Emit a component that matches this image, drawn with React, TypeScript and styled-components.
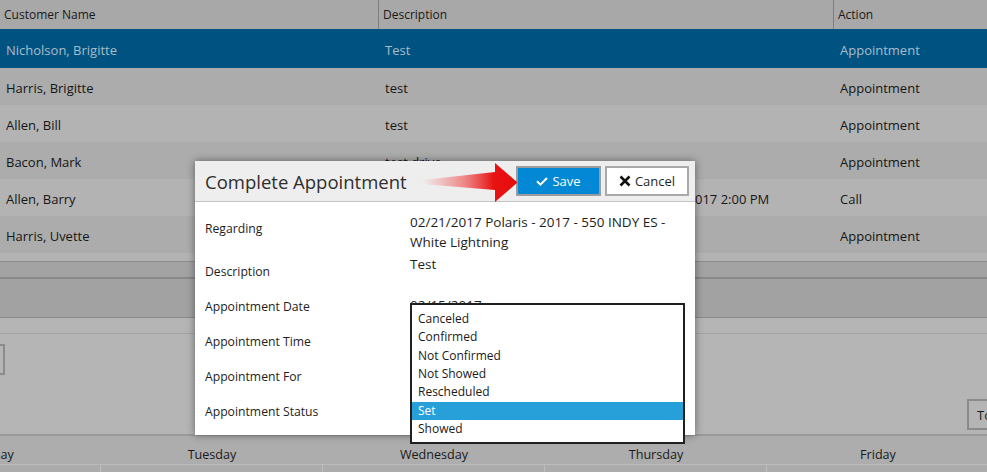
import React from 'react';
import styled, { createGlobalStyle } from 'styled-components';

type Activity = {
    id: number;
    customer: string;
    description: string;
    action: string;
};

const activities: Activity[] = [
    { id: 1, customer: 'Nicholson, Brigitte', description: 'Test', action: 'Appointment' },
    { id: 2, customer: 'Harris, Brigitte', description: 'test', action: 'Appointment' },
    { id: 3, customer: 'Allen, Bill', description: 'test', action: 'Appointment' },
    { id: 4, customer: 'Bacon, Mark', description: 'test drive', action: 'Appointment' },
    {
        id: 5,
        customer: 'Allen, Barry',
        description: 'Call to discuss financing options - follow up 02/22/2017 2:00 PM',
        action: 'Call',
    },
    { id: 6, customer: 'Harris, Uvette', description: 'test', action: 'Appointment' },
];

const selectedId = 1;

const statuses = ['Canceled', 'Confirmed', 'Not Confirmed', 'Not Showed', 'Rescheduled', 'Set', 'Showed'];
const currentStatus = 'Set';

const days = [
    { name: 'Monday', date: 20 },
    { name: 'Tuesday', date: 21 },
    { name: 'Wednesday', date: 22 },
    { name: 'Thursday', date: 23 },
    { name: 'Friday', date: 24 },
];

const COLUMNS = '378px 455px 1fr';
const DAY_COLUMNS = 'repeat(5, 222px)';

const GlobalStyle = createGlobalStyle`
    html, body {
        margin: 0;
        padding: 0;
    }
    body {
        font-family: 'Open Sans', 'Noto Sans', sans-serif;
        background: #b4b4b4;
        overflow: hidden;
    }
    * {
        box-sizing: border-box;
    }
`;

const Page = styled.div`
    position: relative;
    width: 987px;
    height: 472px;
    overflow: hidden;
    background: #b4b4b4;
    color: #161616;
`;

/* ---------- activity grid ---------- */

const GridHeader = styled.div`
    display: grid;
    grid-template-columns: ${COLUMNS};
    height: 29px;
    background: #a8a8a8;
`;

const HeaderCell = styled.div`
    display: flex;
    align-items: center;
    padding-left: 4px;
    font-size: 12px;
    color: #1a1a1a;

    & + & {
        border-left: 1px solid #7e7e7e;
    }
`;

const Row = styled.div<{ $selected: boolean; $alt: boolean }>`
    display: grid;
    grid-template-columns: ${COLUMNS};
    height: ${({ $selected }) => ($selected ? 39 : 37)}px;
    background: ${({ $selected, $alt }) => ($selected ? '#005380' : $alt ? '#b3b3b3' : '#acacac')};
    color: ${({ $selected }) => ($selected ? '#a9bccb' : '#161616')};
`;

const Cell = styled.div`
    display: flex;
    align-items: center;
    padding: 3px 7px 0;
    font-size: 13px;
    white-space: nowrap;

    &:first-child {
        padding-left: 6px;
    }
`;

const GridFiller = styled.div`
    height: 9px;
    background: #b3b3b3;
    border-bottom: 1px solid #8c8c8c;
`;

const PagerBand = styled.div`
    height: 17px;
    background: #a3a3a3;
    border-bottom: 2px solid #898989;
`;

const SchedulerTitle = styled.div`
    height: 39px;
    background: #a2a2a2;
    border-bottom: 1px solid #8b8b8b;
`;

const TabStrip = styled.div`
    height: 16px;
    background: #b5b5b5;
    border-bottom: 1px solid #a3a3a3;
`;

/* ---------- scheduler ---------- */

const Toolbar = styled.div`
    height: 102px;
    display: flex;
    flex-direction: column;
    padding-top: 10px;
    background: #b5b5b5;
    border-bottom: 2px solid #9a9a9a;
`;

const ToolRow = styled.div<{ $end?: boolean }>`
    display: flex;
    justify-content: ${({ $end }) => ($end ? 'flex-end' : 'flex-start')};
`;

const NavButton = styled.button`
    width: 40px;
    height: 31px;
    margin-left: -35px;
    border: 2px solid #8c8c8c;
    background: transparent;
`;

const TodayButton = styled.button`
    width: 60px;
    height: 31px;
    margin-top: 24px;
    margin-right: -40px;
    padding: 0 0 0 8px;
    text-align: left;
    border: 2px solid #8a8a8a;
    background: transparent;
    font: 13px 'Open Sans', sans-serif;
    color: #1a1a1a;
`;

const DayHeader = styled.div`
    display: grid;
    grid-template-columns: ${DAY_COLUMNS};
    margin-left: -121px;
    height: 29px;
    background: #adadad;
    border-bottom: 1px solid #bcbcbc;
`;

const DayName = styled.div`
    display: flex;
    align-items: center;
    justify-content: center;
    padding-top: 9px;
    font-size: 12.6px;
    color: #1a1a1a;
`;

const DayCells = styled.div`
    display: grid;
    grid-template-columns: ${DAY_COLUMNS};
    margin-left: -121px;
    height: 40px;
    background: #ababab;
`;

const DayCell = styled.div`
    border-right: 1px solid #bdbdbd;
    padding: 6px 6px 0 0;
    text-align: right;
    font-size: 12px;
    line-height: 16px;
    color: #1a1a1a;
`;

/* ---------- modal ---------- */

const Modal = styled.div`
    position: absolute;
    left: 195px;
    top: 161px;
    width: 500px;
    background: #ffffff;
    box-shadow: 0 0 8px rgba(0, 0, 0, 0.45);
    z-index: 2;
`;

const ModalHeader = styled.div`
    height: 41px;
    display: flex;
    align-items: center;
    justify-content: space-between;
    padding: 0 6px 0 10px;
    background: #eeeeee;
    border-bottom: 1px solid #c4c4c4;
`;

const ModalTitle = styled.h2`
    margin: 0;
    font-size: 18.5px;
    font-weight: 400;
    color: #2f2f2f;
`;

const HeaderActions = styled.div`
    display: flex;
    gap: 4px;
`;

const ActionButton = styled.button<{ $primary?: boolean }>`
    width: ${({ $primary }) => ($primary ? 85 : 84)}px;
    height: 30px;
    display: inline-flex;
    align-items: center;
    justify-content: center;
    gap: 4px;
    padding: 0;
    border: 2px solid ${({ $primary }) => ($primary ? '#9c9c9c' : '#a9a9a9')};
    background: ${({ $primary }) => ($primary ? '#0288d4' : '#ffffff')};
    color: ${({ $primary }) => ($primary ? '#ffffff' : '#1f1f1f')};
    font: 13px 'Open Sans', sans-serif;
`;

const ModalBody = styled.div`
    padding: 4px 10px 6px;
`;

const FieldRow = styled.div<{ $height: number }>`
    display: grid;
    grid-template-columns: 205px 275px;
    height: ${({ $height }) => $height}px;
`;

const FieldLabel = styled.div<{ $offset?: number }>`
    height: 35px;
    margin-top: ${({ $offset = 0 }) => $offset}px;
    display: flex;
    align-items: center;
    font-size: 12.2px;
    color: #1e1e1e;
`;

const FieldValue = styled.div<{ $offset?: number }>`
    position: relative;
    padding-top: ${({ $offset = 7.75 }) => $offset}px;
    font-size: 13.5px;
    line-height: 19.5px;
    color: #1e1e1e;
`;

const SelectList = styled.ul`
    position: absolute;
    left: 0;
    top: -91px;
    width: 275px;
    height: 141px;
    margin: 0;
    padding: 5px 0 3px;
    list-style: none;
    background: #ffffff;
    border: 2px solid #202020;
    z-index: 3;
`;

const SelectOption = styled.li<{ $active: boolean }>`
    height: 18.33px;
    line-height: 18.33px;
    padding-left: 6px;
    font-size: 12px;
    background: ${({ $active }) => ($active ? '#279fd9' : 'transparent')};
    color: ${({ $active }) => ($active ? '#ffffff' : '#1a1a1a')};
`;

const PointerArrow = styled.svg`
    position: absolute;
    left: 420px;
    top: 161px;
    z-index: 4;
`;

function CheckIcon() {
    return (
        <svg width='12' height='9' viewBox='0 0 12 9' aria-hidden>
            <polyline points='1,4.2 4.4,7.6 11,1' fill='none' stroke='#ffffff' strokeWidth='2' />
        </svg>
    );
}

function CloseIcon() {
    return (
        <svg width='12' height='12' viewBox='0 0 12 12' aria-hidden>
            <path d='M1.5 1.5 L10.5 10.5 M10.5 1.5 L1.5 10.5' stroke='#111111' strokeWidth='2.6' fill='none' />
        </svg>
    );
}

export default function App() {
    return (
        <Page>
            <GlobalStyle />

            <GridHeader>
                <HeaderCell>Customer Name</HeaderCell>
                <HeaderCell>Description</HeaderCell>
                <HeaderCell>Action</HeaderCell>
            </GridHeader>
            {activities.map((a, i) => (
                <Row key={a.id} $selected={a.id === selectedId} $alt={i % 2 === 0}>
                    <Cell>{a.customer}</Cell>
                    <Cell>{a.description}</Cell>
                    <Cell>{a.action}</Cell>
                </Row>
            ))}
            <GridFiller />
            <PagerBand />
            <SchedulerTitle />
            <TabStrip />

            <Toolbar>
                <ToolRow>
                    <NavButton aria-label='Previous' />
                </ToolRow>
                <ToolRow $end>
                    <TodayButton>Today</TodayButton>
                </ToolRow>
            </Toolbar>
            <DayHeader>
                {days.map((d) => (
                    <DayName key={d.name}>{d.name}</DayName>
                ))}
            </DayHeader>
            <DayCells>
                {days.map((d) => (
                    <DayCell key={d.name}>{d.date}</DayCell>
                ))}
            </DayCells>

            <Modal>
                <ModalHeader>
                    <ModalTitle>Complete Appointment</ModalTitle>
                    <HeaderActions>
                        <ActionButton $primary>
                            <CheckIcon />
                            Save
                        </ActionButton>
                        <ActionButton>
                            <CloseIcon />
                            Cancel
                        </ActionButton>
                    </HeaderActions>
                </ModalHeader>
                <ModalBody>
                    <FieldRow $height={44}>
                        <FieldLabel $offset={4.5}>Regarding</FieldLabel>
                        <FieldValue $offset={7}>02/21/2017 Polaris - 2017 - 550 INDY ES - White Lightning</FieldValue>
                    </FieldRow>
                    <FieldRow $height={39}>
                        <FieldLabel $offset={4}>Description</FieldLabel>
                        <FieldValue $offset={5}>Test</FieldValue>
                    </FieldRow>
                    <FieldRow $height={35}>
                        <FieldLabel>Appointment Date</FieldLabel>
                        <FieldValue $offset={7}>02/15/2017</FieldValue>
                    </FieldRow>
                    <FieldRow $height={35}>
                        <FieldLabel>Appointment Time</FieldLabel>
                        <FieldValue />
                    </FieldRow>
                    <FieldRow $height={35}>
                        <FieldLabel>Appointment For</FieldLabel>
                        <FieldValue />
                    </FieldRow>
                    <FieldRow $height={35}>
                        <FieldLabel>Appointment Status</FieldLabel>
                        <FieldValue>
                            <SelectList role='listbox'>
                                {statuses.map((s) => (
                                    <SelectOption key={s} $active={s === currentStatus}>
                                        {s}
                                    </SelectOption>
                                ))}
                            </SelectList>
                        </FieldValue>
                    </FieldRow>
                </ModalBody>
            </Modal>

            <PointerArrow width='102' height='44' viewBox='0 0 102 44' aria-hidden>
                <defs>
                    <linearGradient id='arrowFade' x1='0' y1='0' x2='1' y2='0'>
                        <stop offset='0' stopColor='#f04040' stopOpacity='0' />
                        <stop offset='0.45' stopColor='#ec3030' stopOpacity='0.55' />
                        <stop offset='0.75' stopColor='#e81212' stopOpacity='1' />
                        <stop offset='1' stopColor='#e80c0c' stopOpacity='1' />
                    </linearGradient>
                </defs>
                <polygon points='2,19 75,11 75,2 97.5,21.5 75,41 75,29 2,23' fill='url(#arrowFade)' />
            </PointerArrow>
        </Page>
    );
}
